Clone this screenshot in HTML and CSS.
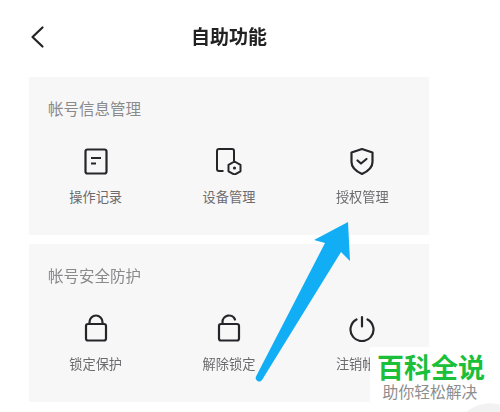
FILE: index.html
```html
<!DOCTYPE html>
<html lang="zh-CN">
<head>
<meta charset="utf-8">
<title>自助功能</title>
<link rel="stylesheet" href="styles.css">
</head>
<body>
<main class="page">
  <header class="header">
    <svg class="back" width="16" height="24" viewBox="0 0 16 24"><path d="M13.5 2.5 3.5 12l10 9.5" fill="none" stroke="#222" stroke-width="2.2" stroke-linecap="round" stroke-linejoin="round"/></svg>
    <h1 class="title">自助功能</h1>
  </header>
  <section class="card">
    <h2 class="card-title">帐号信息管理</h2>
    <div class="items">
      <div class="item">
        <svg class="icon" width="28" height="28" viewBox="0 0 28 28"><rect x="3.5" y="2.500" width="21" height="24" rx="2" fill="none" stroke="#26262a" stroke-width="2.200"/><path d="M9 11h10M9 16.500h5" stroke="#26262a" stroke-width="2.200" fill="none"/></svg>
        <span class="label">操作记录</span>
      </div>
      <div class="item">
        <svg class="icon" width="28" height="28" viewBox="0 0 28 28"><path d="M8.500 24H4a2 2 0 0 1-2-2V4a2 2 0 0 1 2-2h13a2 2 0 0 1 2 2v10" fill="none" stroke="#26262a" stroke-width="2"/><path d="M19.500 14.500l6 3.400v6.400l-6 3.400-6-3.400v-6.400z" fill="none" stroke="#26262a" stroke-width="2" stroke-linejoin="round"/><circle cx="19.500" cy="21" r="1.600" fill="#26262a"/></svg>
        <span class="label">设备管理</span>
      </div>
      <div class="item">
        <svg class="icon" width="28" height="28" viewBox="0 0 28 28"><path d="M14 2 24.500 5.500V15c0 5.500-5 9.500-10.500 12C8.500 24.500 3.500 20.500 3.500 15V5.500z" fill="none" stroke="#26262a" stroke-width="2.200" stroke-linejoin="round"/><path d="M9.500 13.500 13 16.500l5.500-4.500" fill="none" stroke="#26262a" stroke-width="2.200" stroke-linecap="round" stroke-linejoin="round"/></svg>
        <span class="label">授权管理</span>
      </div>
    </div>
  </section>
  <section class="card">
    <h2 class="card-title">帐号安全防护</h2>
    <div class="items">
      <div class="item">
        <svg class="icon" width="28" height="28" viewBox="0 0 28 28"><rect x="4" y="10" width="20" height="16.500" rx="2" fill="none" stroke="#26262a" stroke-width="2.200"/><path d="M7.500 10V8a6.500 6.500 0 0 1 13 0v2" fill="none" stroke="#26262a" stroke-width="2.200"/></svg>
        <span class="label">锁定保护</span>
      </div>
      <div class="item">
        <svg class="icon" width="28" height="28" viewBox="0 0 28 28"><rect x="4" y="10" width="20" height="16.500" rx="2" fill="none" stroke="#26262a" stroke-width="2.200"/><path d="M7.500 10V8a6.500 6.500 0 0 1 12.500-2.500" fill="none" stroke="#26262a" stroke-width="2.200" stroke-linecap="round"/></svg>
        <span class="label">解除锁定</span>
      </div>
      <div class="item">
        <svg class="icon" width="28" height="28" viewBox="0 0 28 28"><path d="M8.500 5.500a11.500 11.500 0 1 0 11 0" fill="none" stroke="#26262a" stroke-width="2.200" stroke-linecap="round"/><path d="M14 3v9.500" stroke="#26262a" stroke-width="2.200" stroke-linecap="round"/></svg>
        <span class="label">注销帐号</span>
      </div>
    </div>
  </section>
</main>
<div class="corner-circle"></div>
<svg class="arrow" width="500" height="412" viewBox="0 0 500 412"><path d="M348 222 350 261 341 252 262 380a3.500 3.500 0 0 1-6-3.500L325 243 314 240z" fill="#12aef5"/></svg>
<aside class="watermark">
  <div class="wm-main">百科全说</div>
  <div class="wm-sub">助你轻松解决</div>
</aside>
</body>
</html>
```
FILE: styles.css
```css
* { box-sizing: border-box; }
html, body { margin: 0; padding: 0; }
html { overflow: hidden; }
body {
  width: 500px;
  height: 412px;
  overflow: hidden;
  position: relative;
  background: #fff;
  font-family: "Noto Sans CJK SC", "Liberation Sans", sans-serif;
}
.page {
  width: 400px;
  margin-left: 29px;
  display: flex;
  flex-direction: column;
  gap: 9px;
  filter: blur(0.35px);
}
.header {
  height: 68px;
  position: relative;
  display: flex;
  justify-content: center;
  align-items: flex-start;
  padding-top: 22px;
}
.back { position: absolute; left: 0; top: 25px; }
.title {
  margin: 0;
  font-size: 19px;
  line-height: 28px;
  font-weight: 700;
  color: #222;
}
.card {
  height: 158px;
  background: #f7f7f8;
  padding-top: 21px;
}
.card-title {
  margin: 0 0 0 19px;
  font-size: 15.500px;
  line-height: 20px;
  font-weight: 400;
  color: #8a8a8c;
}
.items {
  display: grid;
  grid-template-columns: repeat(3, 1fr);
  margin-top: 29px;
}
.item {
  display: flex;
  flex-direction: column;
  align-items: center;
  gap: 12px;
}
.icon { display: block; }
.label {
  font-size: 13.200px;
  line-height: 20px;
  color: #6b6b6d;
}
.arrow { position: absolute; left: 0; top: 0; }
.corner-circle {
  position: absolute;
  left: 450px;
  top: 402px;
  width: 50px;
  height: 10px;
  background: radial-gradient(circle 37px at 40px 38px, #f2f2f2 98%, rgba(242, 242, 242, 0) 100%);
}
.watermark {
  position: absolute;
  left: 370px;
  top: 347px;
  width: 122px;
  height: 56px;
  background: #fff;
  display: flex;
  flex-direction: column;
  align-items: center;
  padding-top: 5px;
}
.wm-main {
  font-size: 27px;
  line-height: 30px;
  font-weight: 700;
  color: #1bbf3a;
}
.wm-sub {
  font-size: 15.800px;
  line-height: 20px;
  margin-left: -2px;
  color: #8e8e8e;
}
```
